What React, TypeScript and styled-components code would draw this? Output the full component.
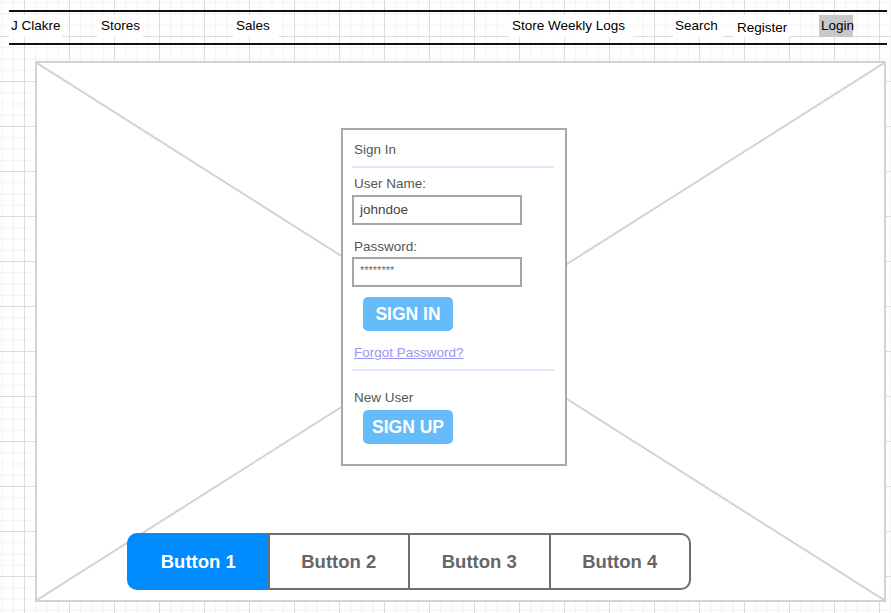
import React from 'react'
import styled, { createGlobalStyle } from 'styled-components'

const GlobalStyle = createGlobalStyle`
  html, body {
    margin: 0;
    padding: 0;
  }
  body {
    width: 891px;
    height: 613px;
    overflow: hidden;
    font-family: "Liberation Sans", Arial, sans-serif;
    background-color: #ffffff;
    background-image:
      linear-gradient(to right, #dcdcdc 1px, transparent 1px),
      linear-gradient(to bottom, #dcdcdc 1px, transparent 1px),
      linear-gradient(to right, #f2f2f2 1px, transparent 1px),
      linear-gradient(to bottom, #f2f2f2 1px, transparent 1px);
    background-size: 45px 45px, 45px 45px, 11.25px 11.25px, 11.25px 11.25px;
    background-position: 24px 36px;
  }
`

const Page = styled.div`
  display: flex;
  flex-direction: column;
  align-items: flex-start;
  padding-top: 10px;
`

const NavBar = styled.nav`
  box-sizing: border-box;
  display: flex;
  align-items: flex-start;
  margin-left: 9px;
  width: 878px;
  height: 35px;
  padding-top: 3px;
  border-top: 2px solid #111;
  border-bottom: 2px solid #111;
`

const NavItem = styled.span<{ $ml: number; $w: number; $pl: number; $pt?: number; $active?: boolean }>`
  box-sizing: border-box;
  margin-left: ${p => p.$ml}px;
  width: ${p => p.$w}px;
  height: 22px;
  padding-left: ${p => p.$pl}px;
  padding-top: ${p => p.$pt || 0}px;
  line-height: 22px;
  font-size: 13.5px;
  color: #000;
  white-space: nowrap;
  background: ${p => (p.$active ? '#c8c8c8' : '#ffffff')};
`

const Frame = styled.div`
  position: relative;
  box-sizing: border-box;
  display: flex;
  flex-direction: column;
  align-items: flex-start;
  margin-top: 16px;
  margin-left: 35px;
  width: 851px;
  height: 541px;
  padding-top: 65px;
  border: 2px solid #d3d3d3;
  background: #fff;
`

const Cross = styled.svg`
  position: absolute;
  inset: 0;
  width: 100%;
  height: 100%;
  pointer-events: none;
`

const Card = styled.div`
  position: relative;
  box-sizing: border-box;
  margin-left: 304px;
  width: 226px;
  padding-bottom: 20px;
  border: 2px solid #a8a8a8;
  background: #fff;
  font-size: 13.5px;
  color: #555;
`

const Text = styled.div<{ $mt: number }>`
  margin-top: ${p => p.$mt}px;
  padding-left: 11px;
  line-height: 16px;
  white-space: nowrap;
`

const Divider = styled.div<{ $mt: number }>`
  margin-top: ${p => p.$mt}px;
  margin-left: 9px;
  width: 202px;
  height: 2px;
  background: #dbe9fb;
`

const Field = styled.div<{ $mt: number; $small?: boolean }>`
  box-sizing: border-box;
  margin-top: ${p => p.$mt}px;
  margin-left: 9px;
  width: 170px;
  height: 30px;
  padding-left: 6px;
  border: 2px solid #a6a6a6;
  line-height: ${p => (p.$small ? '22px' : '26px')};
  font-size: ${p => (p.$small ? '11px' : '13.5px')};
  color: ${p => (p.$small ? '#666' : '#444')};
`

const ActionButton = styled.div<{ $mt: number }>`
  margin-top: ${p => p.$mt}px;
  margin-left: 20px;
  width: 90px;
  height: 34px;
  border-radius: 5px;
  background: #66bbfb;
  color: #fff;
  font-weight: bold;
  font-size: 17.5px;
  line-height: 34px;
  text-align: center;
  white-space: nowrap;
`

const Link = styled.a`
  color: #9a94f7;
  text-decoration: underline;
`

const ButtonGroup = styled.div`
  position: relative;
  display: flex;
  margin-top: 67px;
  margin-left: 90px;
  width: 564px;
  height: 57px;
`

const GroupButton = styled.div<{ $active?: boolean }>`
  box-sizing: border-box;
  flex: 1;
  display: flex;
  align-items: center;
  justify-content: center;
  border: 2px solid ${p => (p.$active ? '#008cff' : '#707070')};
  border-right: 0;
  background: ${p => (p.$active ? '#008cff' : '#fff')};
  color: ${p => (p.$active ? '#fff' : '#666')};
  font-weight: bold;
  font-size: 18.5px;
  &:first-child {
    border-radius: 10px 0 0 10px;
  }
  &:last-child {
    border-right: 2px solid #707070;
    border-radius: 0 10px 10px 0;
  }
`

const navItems = [
  { label: 'J Clakre', ml: 0, w: 53, pl: 2 },
  { label: 'Stores', ml: 35, w: 46, pl: 4 },
  { label: 'Sales', ml: 90, w: 46, pl: 3 },
  { label: 'Store Weekly Logs', ml: 229, w: 125, pl: 4 },
  { label: 'Search', ml: 40, w: 50, pl: 2 },
  { label: 'Register', ml: 10, w: 57, pl: 4, pt: 2 },
  { label: 'Login', ml: 29, w: 34, pl: 2, active: true },
]

const App = () => (
  <Page>
    <GlobalStyle />
    <NavBar>
      {navItems.map(item => (
        <NavItem key={item.label} $ml={item.ml} $w={item.w} $pl={item.pl} $pt={item.pt} $active={item.active}>
          {item.label}
        </NavItem>
      ))}
    </NavBar>
    <Frame>
      <Cross>
        <line x1="0" y1="0" x2="100%" y2="100%" stroke="#d3d3d3" strokeWidth="2" />
        <line x1="100%" y1="0" x2="0" y2="100%" stroke="#d3d3d3" strokeWidth="2" />
      </Cross>
      <Card>
        <Text $mt={12}>Sign In</Text>
        <Divider $mt={8} />
        <Text $mt={8}>User Name:</Text>
        <Field $mt={3}>johndoe</Field>
        <Text $mt={14}>Password:</Text>
        <Field $mt={2} $small>********</Field>
        <ActionButton $mt={10}>SIGN IN</ActionButton>
        <Text $mt={14}><Link>Forgot Password?</Link></Text>
        <Divider $mt={8} />
        <Text $mt={19}>New User</Text>
        <ActionButton $mt={4}>SIGN UP</ActionButton>
      </Card>
      <ButtonGroup>
        {['Button 1', 'Button 2', 'Button 3', 'Button 4'].map((b, i) => (
          <GroupButton key={b} $active={i === 0}>{b}</GroupButton>
        ))}
      </ButtonGroup>
    </Frame>
  </Page>
)

export default App
